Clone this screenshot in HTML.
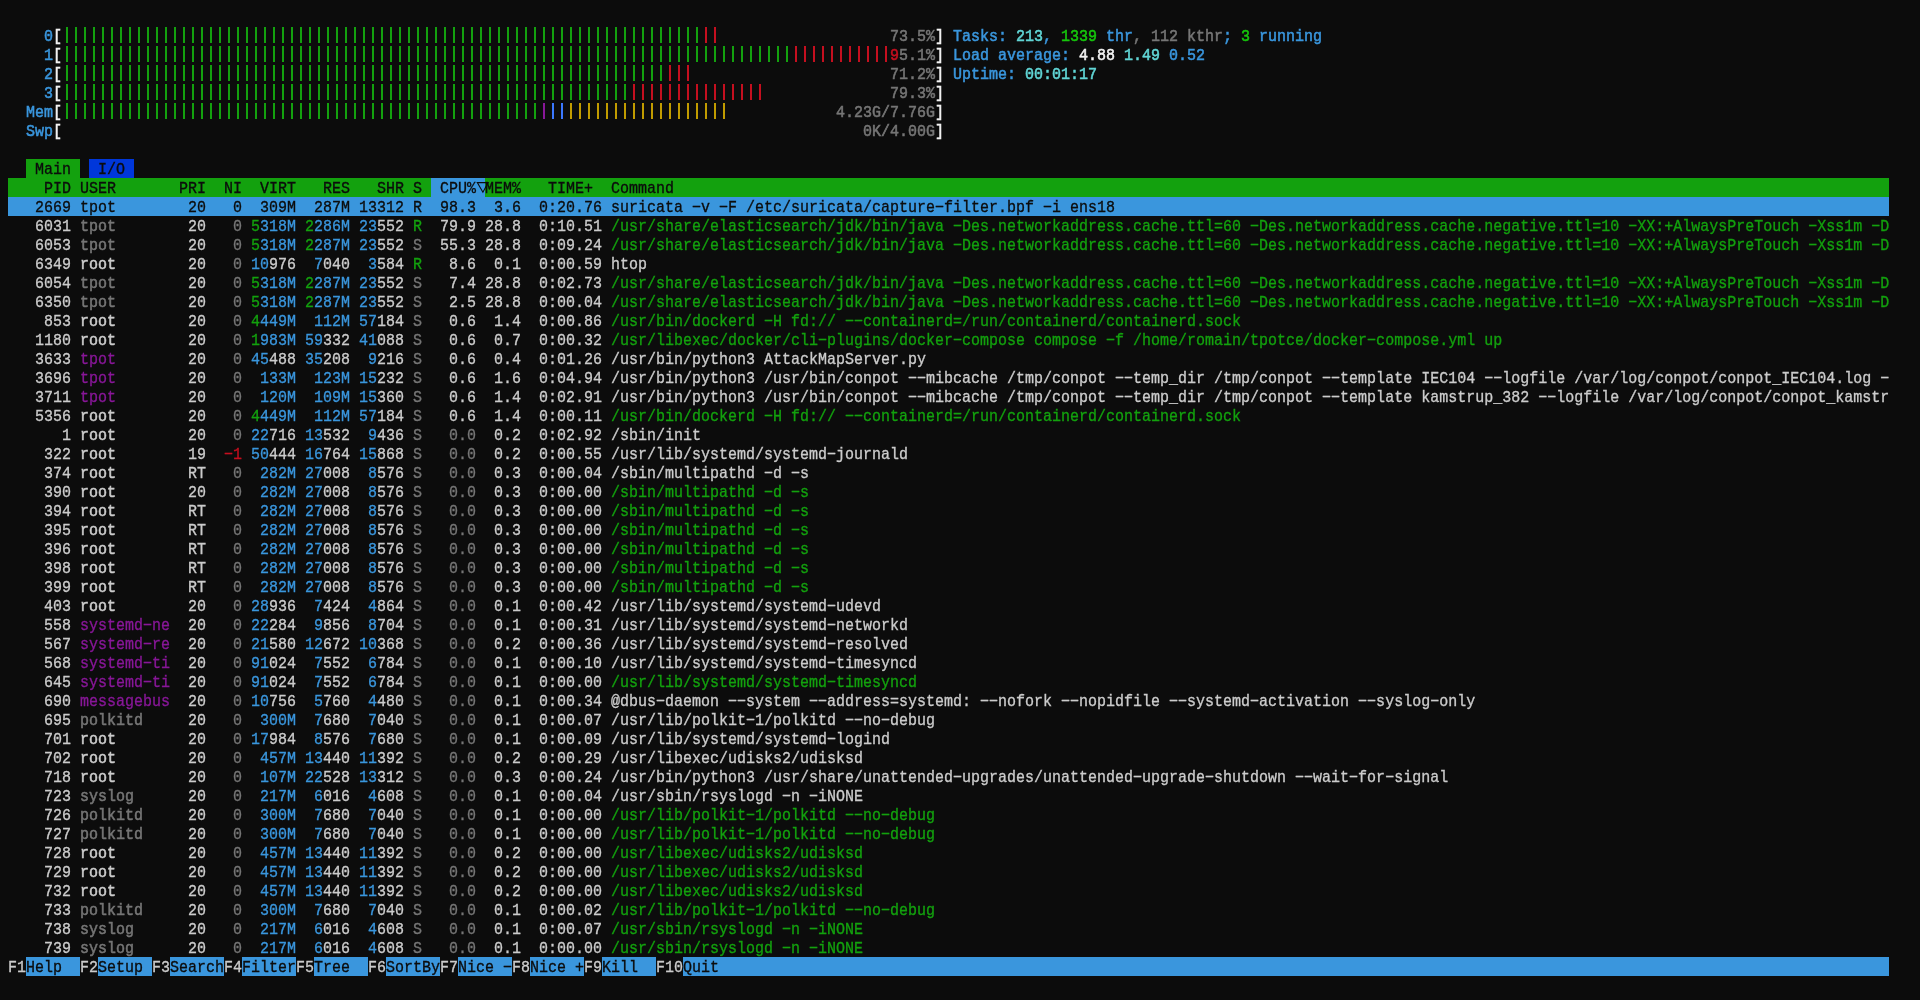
<!DOCTYPE html><html><head><meta charset="utf-8"><style>
html,body{margin:0;padding:0;background:#0c0c0c;width:1920px;height:1000px;overflow:hidden;}
body{position:relative;font-family:"Liberation Mono",monospace;font-size:15px;line-height:19px;}
.r{position:absolute;left:8px;height:19px;white-space:pre;transform:translateY(2px) scaleY(1.1);transform-origin:0 13.5px;will-change:transform}
.b{position:absolute;height:19px;}
.t{position:absolute;white-space:pre;top:0;-webkit-text-stroke:0.3px currentColor}
.c0{color:#cccccc}
.c1{color:#767676}
.c2{color:#3a96dd}
.c3{color:#61d6d6}
.c4{color:#13a10e}
.c5{color:#16c60c}
.c6{color:#c50f1f}
.c7{color:#0037da}
.c8{color:#3b78ff}
.c9{color:#881798}
.c10{color:#c19c00}
.c11{color:#f2f2f2}
.c12{color:#0c0c0c}
.gc0{background:#cccccc}
.gc1{background:#767676}
.gc2{background:#3a96dd}
.gc3{background:#61d6d6}
.gc4{background:#13a10e}
.gc5{background:#16c60c}
.gc6{background:#c50f1f}
.gc7{background:#0037da}
.gc8{background:#3b78ff}
.gc9{background:#881798}
.gc10{background:#c19c00}
.gc11{background:#f2f2f2}
.gc12{background:#0c0c0c}
.B{-webkit-text-stroke:0.5px currentColor}
</style></head><body>
<div class="b gc4" style="top:159px;left:26px;width:54px"></div>
<div class="b gc7" style="top:159px;left:89px;width:45px"></div>
<div class="b gc4" style="top:178px;left:8px;width:1881px"></div>
<div class="b gc2" style="top:178px;left:431px;width:54px"></div>
<div class="b gc2" style="top:197px;left:8px;width:1881px"></div>
<div class="b gc2" style="top:957px;left:26px;width:54px"></div>
<div class="b gc2" style="top:957px;left:98px;width:54px"></div>
<div class="b gc2" style="top:957px;left:170px;width:54px"></div>
<div class="b gc2" style="top:957px;left:242px;width:54px"></div>
<div class="b gc2" style="top:957px;left:314px;width:54px"></div>
<div class="b gc2" style="top:957px;left:386px;width:54px"></div>
<div class="b gc2" style="top:957px;left:458px;width:54px"></div>
<div class="b gc2" style="top:957px;left:530px;width:54px"></div>
<div class="b gc2" style="top:957px;left:602px;width:54px"></div>
<div class="b gc2" style="top:957px;left:683px;width:1206px"></div>
<div style="position:absolute;top:27px;left:66px;width:639px;height:16px;background:repeating-linear-gradient(90deg,#13a10e 0 2px,transparent 2px 9px)"></div>
<div style="position:absolute;top:27px;left:705px;width:18px;height:16px;background:repeating-linear-gradient(90deg,#c50f1f 0 2px,transparent 2px 9px)"></div>
<div style="position:absolute;top:46px;left:66px;width:729px;height:16px;background:repeating-linear-gradient(90deg,#13a10e 0 2px,transparent 2px 9px)"></div>
<div style="position:absolute;top:46px;left:795px;width:99px;height:16px;background:repeating-linear-gradient(90deg,#c50f1f 0 2px,transparent 2px 9px)"></div>
<div style="position:absolute;top:65px;left:66px;width:603px;height:16px;background:repeating-linear-gradient(90deg,#13a10e 0 2px,transparent 2px 9px)"></div>
<div style="position:absolute;top:65px;left:669px;width:27px;height:16px;background:repeating-linear-gradient(90deg,#c50f1f 0 2px,transparent 2px 9px)"></div>
<div style="position:absolute;top:84px;left:66px;width:567px;height:16px;background:repeating-linear-gradient(90deg,#13a10e 0 2px,transparent 2px 9px)"></div>
<div style="position:absolute;top:84px;left:633px;width:135px;height:16px;background:repeating-linear-gradient(90deg,#c50f1f 0 2px,transparent 2px 9px)"></div>
<div style="position:absolute;top:103px;left:66px;width:477px;height:16px;background:repeating-linear-gradient(90deg,#13a10e 0 2px,transparent 2px 9px)"></div>
<div style="position:absolute;top:103px;left:543px;width:9px;height:16px;background:repeating-linear-gradient(90deg,#881798 0 2px,transparent 2px 9px)"></div>
<div style="position:absolute;top:103px;left:552px;width:18px;height:16px;background:repeating-linear-gradient(90deg,#3b78ff 0 2px,transparent 2px 9px)"></div>
<div style="position:absolute;top:103px;left:570px;width:162px;height:16px;background:repeating-linear-gradient(90deg,#c19c00 0 2px,transparent 2px 9px)"></div>
<svg style="position:absolute;left:476px;top:178px" width="14" height="19" viewBox="0 0 14 19"><path d="M1.3 4.6 L12.2 4.6 L6.9 14.2 Z" fill="none" stroke="#0c0c0c" stroke-width="1.1"/></svg>
<div class="r" style="top:26px">
<span class="t c2 B" style="left:18px">  0</span>
<span class="t c11 B" style="left:45px">[</span>
<span class="t c1 B" style="left:882px">73.5%</span>
<span class="t c11 B" style="left:927px">]</span>
<span class="t c2 B" style="left:945px">Tasks: </span>
<span class="t c3 B" style="left:1008px">213</span>
<span class="t c2 B" style="left:1035px">, </span>
<span class="t c5 B" style="left:1053px">1339</span>
<span class="t c2 B" style="left:1089px"> thr</span>
<span class="t c1 B" style="left:1125px">, </span>
<span class="t c1 B" style="left:1143px">112 kthr</span>
<span class="t c2 B" style="left:1215px">; </span>
<span class="t c5 B" style="left:1233px">3</span>
<span class="t c2 B" style="left:1242px"> running</span>
</div>
<div class="r" style="top:45px">
<span class="t c2 B" style="left:18px">  1</span>
<span class="t c11 B" style="left:45px">[</span>
<span class="t c6 B" style="left:882px">9</span>
<span class="t c1 B" style="left:891px">5.1%</span>
<span class="t c11 B" style="left:927px">]</span>
<span class="t c2 B" style="left:945px">Load average: </span>
<span class="t c11 B" style="left:1071px">4.88 </span>
<span class="t c3 B" style="left:1116px">1.49 </span>
<span class="t c2 B" style="left:1161px">0.52</span>
</div>
<div class="r" style="top:64px">
<span class="t c2 B" style="left:18px">  2</span>
<span class="t c11 B" style="left:45px">[</span>
<span class="t c1 B" style="left:882px">71.2%</span>
<span class="t c11 B" style="left:927px">]</span>
<span class="t c2 B" style="left:945px">Uptime: </span>
<span class="t c3 B" style="left:1017px">00:01:17</span>
</div>
<div class="r" style="top:83px">
<span class="t c2 B" style="left:18px">  3</span>
<span class="t c11 B" style="left:45px">[</span>
<span class="t c1 B" style="left:882px">79.3%</span>
<span class="t c11 B" style="left:927px">]</span>
</div>
<div class="r" style="top:102px">
<span class="t c2 B" style="left:18px">Mem</span>
<span class="t c11 B" style="left:45px">[</span>
<span class="t c1 B" style="left:828px">4.23G/7.76G</span>
<span class="t c11 B" style="left:927px">]</span>
</div>
<div class="r" style="top:121px">
<span class="t c2 B" style="left:18px">Swp</span>
<span class="t c11 B" style="left:45px">[</span>
<span class="t c1 B" style="left:855px">0K/4.00G</span>
<span class="t c11 B" style="left:927px">]</span>
</div>
<div class="r" style="top:159px">
<span class="t c12" style="left:27px">Main</span>
<span class="t c12" style="left:90px">I/O</span>
</div>
<div class="r" style="top:178px">
<span class="t c12" style="left:0px">    PID USER       PRI  NI  VIRT   RES   SHR S  CPU%</span>
<span class="t c12" style="left:477px">MEM%   TIME+  Command</span>
</div>
<div class="r" style="top:197px">
<span class="t c12" style="left:0px">   2669 </span>
<span class="t c12" style="left:72px">tpot       </span>
<span class="t c12" style="left:171px"> 20 </span>
<span class="t c12" style="left:207px">  0</span>
<span class="t c12" style="left:234px"> </span>
<span class="t c12" style="left:243px"> 309M</span>
<span class="t c12" style="left:288px"> </span>
<span class="t c12" style="left:297px"> 287M</span>
<span class="t c12" style="left:342px"> </span>
<span class="t c12" style="left:351px">13</span>
<span class="t c12" style="left:369px">312</span>
<span class="t c12" style="left:396px"> </span>
<span class="t c12" style="left:405px">R</span>
<span class="t c12" style="left:414px"> </span>
<span class="t c12" style="left:423px"> 98.3</span>
<span class="t c12" style="left:468px"> </span>
<span class="t c12" style="left:477px"> 3.6 </span>
<span class="t c12" style="left:522px"> 0:20.76 </span>
<span class="t c12" style="left:603px">suricata −v −F /etc/suricata/capture−filter.bpf −i ens18</span>
</div>
<div class="r" style="top:216px">
<span class="t c0" style="left:0px">   6031 </span>
<span class="t c1 B" style="left:72px">tpot       </span>
<span class="t c0" style="left:171px"> 20 </span>
<span class="t c1" style="left:207px">  0</span>
<span class="t c0" style="left:234px"> </span>
<span class="t c4" style="left:243px">5</span>
<span class="t c2" style="left:252px">318M</span>
<span class="t c0" style="left:288px"> </span>
<span class="t c4" style="left:297px">2</span>
<span class="t c2" style="left:306px">286M</span>
<span class="t c0" style="left:342px"> </span>
<span class="t c2" style="left:351px">23</span>
<span class="t c0" style="left:369px">552</span>
<span class="t c0" style="left:396px"> </span>
<span class="t c4" style="left:405px">R</span>
<span class="t c0" style="left:414px"> </span>
<span class="t c0" style="left:423px"> 79.9</span>
<span class="t c0" style="left:468px"> </span>
<span class="t c0" style="left:477px">28.8 </span>
<span class="t c0" style="left:522px"> 0:10.51 </span>
<span class="t c4" style="left:603px">/usr/share/elasticsearch/jdk/bin/java −Des.networkaddress.cache.ttl=60 −Des.networkaddress.cache.negative.ttl=10 −XX:+AlwaysPreTouch −Xss1m −D</span>
</div>
<div class="r" style="top:235px">
<span class="t c0" style="left:0px">   6053 </span>
<span class="t c1 B" style="left:72px">tpot       </span>
<span class="t c0" style="left:171px"> 20 </span>
<span class="t c1" style="left:207px">  0</span>
<span class="t c0" style="left:234px"> </span>
<span class="t c4" style="left:243px">5</span>
<span class="t c2" style="left:252px">318M</span>
<span class="t c0" style="left:288px"> </span>
<span class="t c4" style="left:297px">2</span>
<span class="t c2" style="left:306px">287M</span>
<span class="t c0" style="left:342px"> </span>
<span class="t c2" style="left:351px">23</span>
<span class="t c0" style="left:369px">552</span>
<span class="t c0" style="left:396px"> </span>
<span class="t c1" style="left:405px">S</span>
<span class="t c0" style="left:414px"> </span>
<span class="t c0" style="left:423px"> 55.3</span>
<span class="t c0" style="left:468px"> </span>
<span class="t c0" style="left:477px">28.8 </span>
<span class="t c0" style="left:522px"> 0:09.24 </span>
<span class="t c4" style="left:603px">/usr/share/elasticsearch/jdk/bin/java −Des.networkaddress.cache.ttl=60 −Des.networkaddress.cache.negative.ttl=10 −XX:+AlwaysPreTouch −Xss1m −D</span>
</div>
<div class="r" style="top:254px">
<span class="t c0" style="left:0px">   6349 </span>
<span class="t c0 B" style="left:72px">root       </span>
<span class="t c0" style="left:171px"> 20 </span>
<span class="t c1" style="left:207px">  0</span>
<span class="t c0" style="left:234px"> </span>
<span class="t c2" style="left:243px">10</span>
<span class="t c0" style="left:261px">976</span>
<span class="t c0" style="left:288px"> </span>
<span class="t c2" style="left:297px"> 7</span>
<span class="t c0" style="left:315px">040</span>
<span class="t c0" style="left:342px"> </span>
<span class="t c2" style="left:351px"> 3</span>
<span class="t c0" style="left:369px">584</span>
<span class="t c0" style="left:396px"> </span>
<span class="t c4" style="left:405px">R</span>
<span class="t c0" style="left:414px"> </span>
<span class="t c0" style="left:423px">  8.6</span>
<span class="t c0" style="left:468px"> </span>
<span class="t c0" style="left:477px"> 0.1 </span>
<span class="t c0" style="left:522px"> 0:00.59 </span>
<span class="t c0" style="left:603px">htop</span>
</div>
<div class="r" style="top:273px">
<span class="t c0" style="left:0px">   6054 </span>
<span class="t c1 B" style="left:72px">tpot       </span>
<span class="t c0" style="left:171px"> 20 </span>
<span class="t c1" style="left:207px">  0</span>
<span class="t c0" style="left:234px"> </span>
<span class="t c4" style="left:243px">5</span>
<span class="t c2" style="left:252px">318M</span>
<span class="t c0" style="left:288px"> </span>
<span class="t c4" style="left:297px">2</span>
<span class="t c2" style="left:306px">287M</span>
<span class="t c0" style="left:342px"> </span>
<span class="t c2" style="left:351px">23</span>
<span class="t c0" style="left:369px">552</span>
<span class="t c0" style="left:396px"> </span>
<span class="t c1" style="left:405px">S</span>
<span class="t c0" style="left:414px"> </span>
<span class="t c0" style="left:423px">  7.4</span>
<span class="t c0" style="left:468px"> </span>
<span class="t c0" style="left:477px">28.8 </span>
<span class="t c0" style="left:522px"> 0:02.73 </span>
<span class="t c4" style="left:603px">/usr/share/elasticsearch/jdk/bin/java −Des.networkaddress.cache.ttl=60 −Des.networkaddress.cache.negative.ttl=10 −XX:+AlwaysPreTouch −Xss1m −D</span>
</div>
<div class="r" style="top:292px">
<span class="t c0" style="left:0px">   6350 </span>
<span class="t c1 B" style="left:72px">tpot       </span>
<span class="t c0" style="left:171px"> 20 </span>
<span class="t c1" style="left:207px">  0</span>
<span class="t c0" style="left:234px"> </span>
<span class="t c4" style="left:243px">5</span>
<span class="t c2" style="left:252px">318M</span>
<span class="t c0" style="left:288px"> </span>
<span class="t c4" style="left:297px">2</span>
<span class="t c2" style="left:306px">287M</span>
<span class="t c0" style="left:342px"> </span>
<span class="t c2" style="left:351px">23</span>
<span class="t c0" style="left:369px">552</span>
<span class="t c0" style="left:396px"> </span>
<span class="t c1" style="left:405px">S</span>
<span class="t c0" style="left:414px"> </span>
<span class="t c0" style="left:423px">  2.5</span>
<span class="t c0" style="left:468px"> </span>
<span class="t c0" style="left:477px">28.8 </span>
<span class="t c0" style="left:522px"> 0:00.04 </span>
<span class="t c4" style="left:603px">/usr/share/elasticsearch/jdk/bin/java −Des.networkaddress.cache.ttl=60 −Des.networkaddress.cache.negative.ttl=10 −XX:+AlwaysPreTouch −Xss1m −D</span>
</div>
<div class="r" style="top:311px">
<span class="t c0" style="left:0px">    853 </span>
<span class="t c0 B" style="left:72px">root       </span>
<span class="t c0" style="left:171px"> 20 </span>
<span class="t c1" style="left:207px">  0</span>
<span class="t c0" style="left:234px"> </span>
<span class="t c4" style="left:243px">4</span>
<span class="t c2" style="left:252px">449M</span>
<span class="t c0" style="left:288px"> </span>
<span class="t c2" style="left:297px"> 112M</span>
<span class="t c0" style="left:342px"> </span>
<span class="t c2" style="left:351px">57</span>
<span class="t c0" style="left:369px">184</span>
<span class="t c0" style="left:396px"> </span>
<span class="t c1" style="left:405px">S</span>
<span class="t c0" style="left:414px"> </span>
<span class="t c0" style="left:423px">  0.6</span>
<span class="t c0" style="left:468px"> </span>
<span class="t c0" style="left:477px"> 1.4 </span>
<span class="t c0" style="left:522px"> 0:00.86 </span>
<span class="t c4" style="left:603px">/usr/bin/dockerd −H fd:// −−containerd=/run/containerd/containerd.sock</span>
</div>
<div class="r" style="top:330px">
<span class="t c0" style="left:0px">   1180 </span>
<span class="t c0 B" style="left:72px">root       </span>
<span class="t c0" style="left:171px"> 20 </span>
<span class="t c1" style="left:207px">  0</span>
<span class="t c0" style="left:234px"> </span>
<span class="t c4" style="left:243px">1</span>
<span class="t c2" style="left:252px">983M</span>
<span class="t c0" style="left:288px"> </span>
<span class="t c2" style="left:297px">59</span>
<span class="t c0" style="left:315px">332</span>
<span class="t c0" style="left:342px"> </span>
<span class="t c2" style="left:351px">41</span>
<span class="t c0" style="left:369px">088</span>
<span class="t c0" style="left:396px"> </span>
<span class="t c1" style="left:405px">S</span>
<span class="t c0" style="left:414px"> </span>
<span class="t c0" style="left:423px">  0.6</span>
<span class="t c0" style="left:468px"> </span>
<span class="t c0" style="left:477px"> 0.7 </span>
<span class="t c0" style="left:522px"> 0:00.32 </span>
<span class="t c4" style="left:603px">/usr/libexec/docker/cli−plugins/docker−compose compose −f /home/romain/tpotce/docker−compose.yml up</span>
</div>
<div class="r" style="top:349px">
<span class="t c0" style="left:0px">   3633 </span>
<span class="t c9" style="left:72px">tpot       </span>
<span class="t c0" style="left:171px"> 20 </span>
<span class="t c1" style="left:207px">  0</span>
<span class="t c0" style="left:234px"> </span>
<span class="t c2" style="left:243px">45</span>
<span class="t c0" style="left:261px">488</span>
<span class="t c0" style="left:288px"> </span>
<span class="t c2" style="left:297px">35</span>
<span class="t c0" style="left:315px">208</span>
<span class="t c0" style="left:342px"> </span>
<span class="t c2" style="left:351px"> 9</span>
<span class="t c0" style="left:369px">216</span>
<span class="t c0" style="left:396px"> </span>
<span class="t c1" style="left:405px">S</span>
<span class="t c0" style="left:414px"> </span>
<span class="t c0" style="left:423px">  0.6</span>
<span class="t c0" style="left:468px"> </span>
<span class="t c0" style="left:477px"> 0.4 </span>
<span class="t c0" style="left:522px"> 0:01.26 </span>
<span class="t c0" style="left:603px">/usr/bin/python3 AttackMapServer.py</span>
</div>
<div class="r" style="top:368px">
<span class="t c0" style="left:0px">   3696 </span>
<span class="t c9" style="left:72px">tpot       </span>
<span class="t c0" style="left:171px"> 20 </span>
<span class="t c1" style="left:207px">  0</span>
<span class="t c0" style="left:234px"> </span>
<span class="t c2" style="left:243px"> 133M</span>
<span class="t c0" style="left:288px"> </span>
<span class="t c2" style="left:297px"> 123M</span>
<span class="t c0" style="left:342px"> </span>
<span class="t c2" style="left:351px">15</span>
<span class="t c0" style="left:369px">232</span>
<span class="t c0" style="left:396px"> </span>
<span class="t c1" style="left:405px">S</span>
<span class="t c0" style="left:414px"> </span>
<span class="t c0" style="left:423px">  0.6</span>
<span class="t c0" style="left:468px"> </span>
<span class="t c0" style="left:477px"> 1.6 </span>
<span class="t c0" style="left:522px"> 0:04.94 </span>
<span class="t c0" style="left:603px">/usr/bin/python3 /usr/bin/conpot −−mibcache /tmp/conpot −−temp_dir /tmp/conpot −−template IEC104 −−logfile /var/log/conpot/conpot_IEC104.log −</span>
</div>
<div class="r" style="top:387px">
<span class="t c0" style="left:0px">   3711 </span>
<span class="t c9" style="left:72px">tpot       </span>
<span class="t c0" style="left:171px"> 20 </span>
<span class="t c1" style="left:207px">  0</span>
<span class="t c0" style="left:234px"> </span>
<span class="t c2" style="left:243px"> 120M</span>
<span class="t c0" style="left:288px"> </span>
<span class="t c2" style="left:297px"> 109M</span>
<span class="t c0" style="left:342px"> </span>
<span class="t c2" style="left:351px">15</span>
<span class="t c0" style="left:369px">360</span>
<span class="t c0" style="left:396px"> </span>
<span class="t c1" style="left:405px">S</span>
<span class="t c0" style="left:414px"> </span>
<span class="t c0" style="left:423px">  0.6</span>
<span class="t c0" style="left:468px"> </span>
<span class="t c0" style="left:477px"> 1.4 </span>
<span class="t c0" style="left:522px"> 0:02.91 </span>
<span class="t c0" style="left:603px">/usr/bin/python3 /usr/bin/conpot −−mibcache /tmp/conpot −−temp_dir /tmp/conpot −−template kamstrup_382 −−logfile /var/log/conpot/conpot_kamstr</span>
</div>
<div class="r" style="top:406px">
<span class="t c0" style="left:0px">   5356 </span>
<span class="t c0 B" style="left:72px">root       </span>
<span class="t c0" style="left:171px"> 20 </span>
<span class="t c1" style="left:207px">  0</span>
<span class="t c0" style="left:234px"> </span>
<span class="t c4" style="left:243px">4</span>
<span class="t c2" style="left:252px">449M</span>
<span class="t c0" style="left:288px"> </span>
<span class="t c2" style="left:297px"> 112M</span>
<span class="t c0" style="left:342px"> </span>
<span class="t c2" style="left:351px">57</span>
<span class="t c0" style="left:369px">184</span>
<span class="t c0" style="left:396px"> </span>
<span class="t c1" style="left:405px">S</span>
<span class="t c0" style="left:414px"> </span>
<span class="t c0" style="left:423px">  0.6</span>
<span class="t c0" style="left:468px"> </span>
<span class="t c0" style="left:477px"> 1.4 </span>
<span class="t c0" style="left:522px"> 0:00.11 </span>
<span class="t c4" style="left:603px">/usr/bin/dockerd −H fd:// −−containerd=/run/containerd/containerd.sock</span>
</div>
<div class="r" style="top:425px">
<span class="t c0" style="left:0px">      1 </span>
<span class="t c0 B" style="left:72px">root       </span>
<span class="t c0" style="left:171px"> 20 </span>
<span class="t c1" style="left:207px">  0</span>
<span class="t c0" style="left:234px"> </span>
<span class="t c2" style="left:243px">22</span>
<span class="t c0" style="left:261px">716</span>
<span class="t c0" style="left:288px"> </span>
<span class="t c2" style="left:297px">13</span>
<span class="t c0" style="left:315px">532</span>
<span class="t c0" style="left:342px"> </span>
<span class="t c2" style="left:351px"> 9</span>
<span class="t c0" style="left:369px">436</span>
<span class="t c0" style="left:396px"> </span>
<span class="t c1" style="left:405px">S</span>
<span class="t c0" style="left:414px"> </span>
<span class="t c1" style="left:423px">  0.0</span>
<span class="t c0" style="left:468px"> </span>
<span class="t c0" style="left:477px"> 0.2 </span>
<span class="t c0" style="left:522px"> 0:02.92 </span>
<span class="t c0" style="left:603px">/sbin/init</span>
</div>
<div class="r" style="top:444px">
<span class="t c0" style="left:0px">    322 </span>
<span class="t c0 B" style="left:72px">root       </span>
<span class="t c0" style="left:171px"> 19 </span>
<span class="t c6" style="left:207px"> −1</span>
<span class="t c0" style="left:234px"> </span>
<span class="t c2" style="left:243px">50</span>
<span class="t c0" style="left:261px">444</span>
<span class="t c0" style="left:288px"> </span>
<span class="t c2" style="left:297px">16</span>
<span class="t c0" style="left:315px">764</span>
<span class="t c0" style="left:342px"> </span>
<span class="t c2" style="left:351px">15</span>
<span class="t c0" style="left:369px">868</span>
<span class="t c0" style="left:396px"> </span>
<span class="t c1" style="left:405px">S</span>
<span class="t c0" style="left:414px"> </span>
<span class="t c1" style="left:423px">  0.0</span>
<span class="t c0" style="left:468px"> </span>
<span class="t c0" style="left:477px"> 0.2 </span>
<span class="t c0" style="left:522px"> 0:00.55 </span>
<span class="t c0" style="left:603px">/usr/lib/systemd/systemd−journald</span>
</div>
<div class="r" style="top:463px">
<span class="t c0" style="left:0px">    374 </span>
<span class="t c0 B" style="left:72px">root       </span>
<span class="t c0" style="left:171px"> RT </span>
<span class="t c1" style="left:207px">  0</span>
<span class="t c0" style="left:234px"> </span>
<span class="t c2" style="left:243px"> 282M</span>
<span class="t c0" style="left:288px"> </span>
<span class="t c2" style="left:297px">27</span>
<span class="t c0" style="left:315px">008</span>
<span class="t c0" style="left:342px"> </span>
<span class="t c2" style="left:351px"> 8</span>
<span class="t c0" style="left:369px">576</span>
<span class="t c0" style="left:396px"> </span>
<span class="t c1" style="left:405px">S</span>
<span class="t c0" style="left:414px"> </span>
<span class="t c1" style="left:423px">  0.0</span>
<span class="t c0" style="left:468px"> </span>
<span class="t c0" style="left:477px"> 0.3 </span>
<span class="t c0" style="left:522px"> 0:00.04 </span>
<span class="t c0" style="left:603px">/sbin/multipathd −d −s</span>
</div>
<div class="r" style="top:482px">
<span class="t c0" style="left:0px">    390 </span>
<span class="t c0 B" style="left:72px">root       </span>
<span class="t c0" style="left:171px"> 20 </span>
<span class="t c1" style="left:207px">  0</span>
<span class="t c0" style="left:234px"> </span>
<span class="t c2" style="left:243px"> 282M</span>
<span class="t c0" style="left:288px"> </span>
<span class="t c2" style="left:297px">27</span>
<span class="t c0" style="left:315px">008</span>
<span class="t c0" style="left:342px"> </span>
<span class="t c2" style="left:351px"> 8</span>
<span class="t c0" style="left:369px">576</span>
<span class="t c0" style="left:396px"> </span>
<span class="t c1" style="left:405px">S</span>
<span class="t c0" style="left:414px"> </span>
<span class="t c1" style="left:423px">  0.0</span>
<span class="t c0" style="left:468px"> </span>
<span class="t c0" style="left:477px"> 0.3 </span>
<span class="t c0" style="left:522px"> 0:00.00 </span>
<span class="t c4" style="left:603px">/sbin/multipathd −d −s</span>
</div>
<div class="r" style="top:501px">
<span class="t c0" style="left:0px">    394 </span>
<span class="t c0 B" style="left:72px">root       </span>
<span class="t c0" style="left:171px"> RT </span>
<span class="t c1" style="left:207px">  0</span>
<span class="t c0" style="left:234px"> </span>
<span class="t c2" style="left:243px"> 282M</span>
<span class="t c0" style="left:288px"> </span>
<span class="t c2" style="left:297px">27</span>
<span class="t c0" style="left:315px">008</span>
<span class="t c0" style="left:342px"> </span>
<span class="t c2" style="left:351px"> 8</span>
<span class="t c0" style="left:369px">576</span>
<span class="t c0" style="left:396px"> </span>
<span class="t c1" style="left:405px">S</span>
<span class="t c0" style="left:414px"> </span>
<span class="t c1" style="left:423px">  0.0</span>
<span class="t c0" style="left:468px"> </span>
<span class="t c0" style="left:477px"> 0.3 </span>
<span class="t c0" style="left:522px"> 0:00.00 </span>
<span class="t c4" style="left:603px">/sbin/multipathd −d −s</span>
</div>
<div class="r" style="top:520px">
<span class="t c0" style="left:0px">    395 </span>
<span class="t c0 B" style="left:72px">root       </span>
<span class="t c0" style="left:171px"> RT </span>
<span class="t c1" style="left:207px">  0</span>
<span class="t c0" style="left:234px"> </span>
<span class="t c2" style="left:243px"> 282M</span>
<span class="t c0" style="left:288px"> </span>
<span class="t c2" style="left:297px">27</span>
<span class="t c0" style="left:315px">008</span>
<span class="t c0" style="left:342px"> </span>
<span class="t c2" style="left:351px"> 8</span>
<span class="t c0" style="left:369px">576</span>
<span class="t c0" style="left:396px"> </span>
<span class="t c1" style="left:405px">S</span>
<span class="t c0" style="left:414px"> </span>
<span class="t c1" style="left:423px">  0.0</span>
<span class="t c0" style="left:468px"> </span>
<span class="t c0" style="left:477px"> 0.3 </span>
<span class="t c0" style="left:522px"> 0:00.00 </span>
<span class="t c4" style="left:603px">/sbin/multipathd −d −s</span>
</div>
<div class="r" style="top:539px">
<span class="t c0" style="left:0px">    396 </span>
<span class="t c0 B" style="left:72px">root       </span>
<span class="t c0" style="left:171px"> RT </span>
<span class="t c1" style="left:207px">  0</span>
<span class="t c0" style="left:234px"> </span>
<span class="t c2" style="left:243px"> 282M</span>
<span class="t c0" style="left:288px"> </span>
<span class="t c2" style="left:297px">27</span>
<span class="t c0" style="left:315px">008</span>
<span class="t c0" style="left:342px"> </span>
<span class="t c2" style="left:351px"> 8</span>
<span class="t c0" style="left:369px">576</span>
<span class="t c0" style="left:396px"> </span>
<span class="t c1" style="left:405px">S</span>
<span class="t c0" style="left:414px"> </span>
<span class="t c1" style="left:423px">  0.0</span>
<span class="t c0" style="left:468px"> </span>
<span class="t c0" style="left:477px"> 0.3 </span>
<span class="t c0" style="left:522px"> 0:00.00 </span>
<span class="t c4" style="left:603px">/sbin/multipathd −d −s</span>
</div>
<div class="r" style="top:558px">
<span class="t c0" style="left:0px">    398 </span>
<span class="t c0 B" style="left:72px">root       </span>
<span class="t c0" style="left:171px"> RT </span>
<span class="t c1" style="left:207px">  0</span>
<span class="t c0" style="left:234px"> </span>
<span class="t c2" style="left:243px"> 282M</span>
<span class="t c0" style="left:288px"> </span>
<span class="t c2" style="left:297px">27</span>
<span class="t c0" style="left:315px">008</span>
<span class="t c0" style="left:342px"> </span>
<span class="t c2" style="left:351px"> 8</span>
<span class="t c0" style="left:369px">576</span>
<span class="t c0" style="left:396px"> </span>
<span class="t c1" style="left:405px">S</span>
<span class="t c0" style="left:414px"> </span>
<span class="t c1" style="left:423px">  0.0</span>
<span class="t c0" style="left:468px"> </span>
<span class="t c0" style="left:477px"> 0.3 </span>
<span class="t c0" style="left:522px"> 0:00.00 </span>
<span class="t c4" style="left:603px">/sbin/multipathd −d −s</span>
</div>
<div class="r" style="top:577px">
<span class="t c0" style="left:0px">    399 </span>
<span class="t c0 B" style="left:72px">root       </span>
<span class="t c0" style="left:171px"> RT </span>
<span class="t c1" style="left:207px">  0</span>
<span class="t c0" style="left:234px"> </span>
<span class="t c2" style="left:243px"> 282M</span>
<span class="t c0" style="left:288px"> </span>
<span class="t c2" style="left:297px">27</span>
<span class="t c0" style="left:315px">008</span>
<span class="t c0" style="left:342px"> </span>
<span class="t c2" style="left:351px"> 8</span>
<span class="t c0" style="left:369px">576</span>
<span class="t c0" style="left:396px"> </span>
<span class="t c1" style="left:405px">S</span>
<span class="t c0" style="left:414px"> </span>
<span class="t c1" style="left:423px">  0.0</span>
<span class="t c0" style="left:468px"> </span>
<span class="t c0" style="left:477px"> 0.3 </span>
<span class="t c0" style="left:522px"> 0:00.00 </span>
<span class="t c4" style="left:603px">/sbin/multipathd −d −s</span>
</div>
<div class="r" style="top:596px">
<span class="t c0" style="left:0px">    403 </span>
<span class="t c0 B" style="left:72px">root       </span>
<span class="t c0" style="left:171px"> 20 </span>
<span class="t c1" style="left:207px">  0</span>
<span class="t c0" style="left:234px"> </span>
<span class="t c2" style="left:243px">28</span>
<span class="t c0" style="left:261px">936</span>
<span class="t c0" style="left:288px"> </span>
<span class="t c2" style="left:297px"> 7</span>
<span class="t c0" style="left:315px">424</span>
<span class="t c0" style="left:342px"> </span>
<span class="t c2" style="left:351px"> 4</span>
<span class="t c0" style="left:369px">864</span>
<span class="t c0" style="left:396px"> </span>
<span class="t c1" style="left:405px">S</span>
<span class="t c0" style="left:414px"> </span>
<span class="t c1" style="left:423px">  0.0</span>
<span class="t c0" style="left:468px"> </span>
<span class="t c0" style="left:477px"> 0.1 </span>
<span class="t c0" style="left:522px"> 0:00.42 </span>
<span class="t c0" style="left:603px">/usr/lib/systemd/systemd−udevd</span>
</div>
<div class="r" style="top:615px">
<span class="t c0" style="left:0px">    558 </span>
<span class="t c9" style="left:72px">systemd−ne </span>
<span class="t c0" style="left:171px"> 20 </span>
<span class="t c1" style="left:207px">  0</span>
<span class="t c0" style="left:234px"> </span>
<span class="t c2" style="left:243px">22</span>
<span class="t c0" style="left:261px">284</span>
<span class="t c0" style="left:288px"> </span>
<span class="t c2" style="left:297px"> 9</span>
<span class="t c0" style="left:315px">856</span>
<span class="t c0" style="left:342px"> </span>
<span class="t c2" style="left:351px"> 8</span>
<span class="t c0" style="left:369px">704</span>
<span class="t c0" style="left:396px"> </span>
<span class="t c1" style="left:405px">S</span>
<span class="t c0" style="left:414px"> </span>
<span class="t c1" style="left:423px">  0.0</span>
<span class="t c0" style="left:468px"> </span>
<span class="t c0" style="left:477px"> 0.1 </span>
<span class="t c0" style="left:522px"> 0:00.31 </span>
<span class="t c0" style="left:603px">/usr/lib/systemd/systemd−networkd</span>
</div>
<div class="r" style="top:634px">
<span class="t c0" style="left:0px">    567 </span>
<span class="t c9" style="left:72px">systemd−re </span>
<span class="t c0" style="left:171px"> 20 </span>
<span class="t c1" style="left:207px">  0</span>
<span class="t c0" style="left:234px"> </span>
<span class="t c2" style="left:243px">21</span>
<span class="t c0" style="left:261px">580</span>
<span class="t c0" style="left:288px"> </span>
<span class="t c2" style="left:297px">12</span>
<span class="t c0" style="left:315px">672</span>
<span class="t c0" style="left:342px"> </span>
<span class="t c2" style="left:351px">10</span>
<span class="t c0" style="left:369px">368</span>
<span class="t c0" style="left:396px"> </span>
<span class="t c1" style="left:405px">S</span>
<span class="t c0" style="left:414px"> </span>
<span class="t c1" style="left:423px">  0.0</span>
<span class="t c0" style="left:468px"> </span>
<span class="t c0" style="left:477px"> 0.2 </span>
<span class="t c0" style="left:522px"> 0:00.36 </span>
<span class="t c0" style="left:603px">/usr/lib/systemd/systemd−resolved</span>
</div>
<div class="r" style="top:653px">
<span class="t c0" style="left:0px">    568 </span>
<span class="t c9" style="left:72px">systemd−ti </span>
<span class="t c0" style="left:171px"> 20 </span>
<span class="t c1" style="left:207px">  0</span>
<span class="t c0" style="left:234px"> </span>
<span class="t c2" style="left:243px">91</span>
<span class="t c0" style="left:261px">024</span>
<span class="t c0" style="left:288px"> </span>
<span class="t c2" style="left:297px"> 7</span>
<span class="t c0" style="left:315px">552</span>
<span class="t c0" style="left:342px"> </span>
<span class="t c2" style="left:351px"> 6</span>
<span class="t c0" style="left:369px">784</span>
<span class="t c0" style="left:396px"> </span>
<span class="t c1" style="left:405px">S</span>
<span class="t c0" style="left:414px"> </span>
<span class="t c1" style="left:423px">  0.0</span>
<span class="t c0" style="left:468px"> </span>
<span class="t c0" style="left:477px"> 0.1 </span>
<span class="t c0" style="left:522px"> 0:00.10 </span>
<span class="t c0" style="left:603px">/usr/lib/systemd/systemd−timesyncd</span>
</div>
<div class="r" style="top:672px">
<span class="t c0" style="left:0px">    645 </span>
<span class="t c9" style="left:72px">systemd−ti </span>
<span class="t c0" style="left:171px"> 20 </span>
<span class="t c1" style="left:207px">  0</span>
<span class="t c0" style="left:234px"> </span>
<span class="t c2" style="left:243px">91</span>
<span class="t c0" style="left:261px">024</span>
<span class="t c0" style="left:288px"> </span>
<span class="t c2" style="left:297px"> 7</span>
<span class="t c0" style="left:315px">552</span>
<span class="t c0" style="left:342px"> </span>
<span class="t c2" style="left:351px"> 6</span>
<span class="t c0" style="left:369px">784</span>
<span class="t c0" style="left:396px"> </span>
<span class="t c1" style="left:405px">S</span>
<span class="t c0" style="left:414px"> </span>
<span class="t c1" style="left:423px">  0.0</span>
<span class="t c0" style="left:468px"> </span>
<span class="t c0" style="left:477px"> 0.1 </span>
<span class="t c0" style="left:522px"> 0:00.00 </span>
<span class="t c4" style="left:603px">/usr/lib/systemd/systemd−timesyncd</span>
</div>
<div class="r" style="top:691px">
<span class="t c0" style="left:0px">    690 </span>
<span class="t c9" style="left:72px">messagebus </span>
<span class="t c0" style="left:171px"> 20 </span>
<span class="t c1" style="left:207px">  0</span>
<span class="t c0" style="left:234px"> </span>
<span class="t c2" style="left:243px">10</span>
<span class="t c0" style="left:261px">756</span>
<span class="t c0" style="left:288px"> </span>
<span class="t c2" style="left:297px"> 5</span>
<span class="t c0" style="left:315px">760</span>
<span class="t c0" style="left:342px"> </span>
<span class="t c2" style="left:351px"> 4</span>
<span class="t c0" style="left:369px">480</span>
<span class="t c0" style="left:396px"> </span>
<span class="t c1" style="left:405px">S</span>
<span class="t c0" style="left:414px"> </span>
<span class="t c1" style="left:423px">  0.0</span>
<span class="t c0" style="left:468px"> </span>
<span class="t c0" style="left:477px"> 0.1 </span>
<span class="t c0" style="left:522px"> 0:00.34 </span>
<span class="t c0" style="left:603px">@dbus−daemon −−system −−address=systemd: −−nofork −−nopidfile −−systemd−activation −−syslog−only</span>
</div>
<div class="r" style="top:710px">
<span class="t c0" style="left:0px">    695 </span>
<span class="t c1 B" style="left:72px">polkitd    </span>
<span class="t c0" style="left:171px"> 20 </span>
<span class="t c1" style="left:207px">  0</span>
<span class="t c0" style="left:234px"> </span>
<span class="t c2" style="left:243px"> 300M</span>
<span class="t c0" style="left:288px"> </span>
<span class="t c2" style="left:297px"> 7</span>
<span class="t c0" style="left:315px">680</span>
<span class="t c0" style="left:342px"> </span>
<span class="t c2" style="left:351px"> 7</span>
<span class="t c0" style="left:369px">040</span>
<span class="t c0" style="left:396px"> </span>
<span class="t c1" style="left:405px">S</span>
<span class="t c0" style="left:414px"> </span>
<span class="t c1" style="left:423px">  0.0</span>
<span class="t c0" style="left:468px"> </span>
<span class="t c0" style="left:477px"> 0.1 </span>
<span class="t c0" style="left:522px"> 0:00.07 </span>
<span class="t c0" style="left:603px">/usr/lib/polkit−1/polkitd −−no−debug</span>
</div>
<div class="r" style="top:729px">
<span class="t c0" style="left:0px">    701 </span>
<span class="t c0 B" style="left:72px">root       </span>
<span class="t c0" style="left:171px"> 20 </span>
<span class="t c1" style="left:207px">  0</span>
<span class="t c0" style="left:234px"> </span>
<span class="t c2" style="left:243px">17</span>
<span class="t c0" style="left:261px">984</span>
<span class="t c0" style="left:288px"> </span>
<span class="t c2" style="left:297px"> 8</span>
<span class="t c0" style="left:315px">576</span>
<span class="t c0" style="left:342px"> </span>
<span class="t c2" style="left:351px"> 7</span>
<span class="t c0" style="left:369px">680</span>
<span class="t c0" style="left:396px"> </span>
<span class="t c1" style="left:405px">S</span>
<span class="t c0" style="left:414px"> </span>
<span class="t c1" style="left:423px">  0.0</span>
<span class="t c0" style="left:468px"> </span>
<span class="t c0" style="left:477px"> 0.1 </span>
<span class="t c0" style="left:522px"> 0:00.09 </span>
<span class="t c0" style="left:603px">/usr/lib/systemd/systemd−logind</span>
</div>
<div class="r" style="top:748px">
<span class="t c0" style="left:0px">    702 </span>
<span class="t c0 B" style="left:72px">root       </span>
<span class="t c0" style="left:171px"> 20 </span>
<span class="t c1" style="left:207px">  0</span>
<span class="t c0" style="left:234px"> </span>
<span class="t c2" style="left:243px"> 457M</span>
<span class="t c0" style="left:288px"> </span>
<span class="t c2" style="left:297px">13</span>
<span class="t c0" style="left:315px">440</span>
<span class="t c0" style="left:342px"> </span>
<span class="t c2" style="left:351px">11</span>
<span class="t c0" style="left:369px">392</span>
<span class="t c0" style="left:396px"> </span>
<span class="t c1" style="left:405px">S</span>
<span class="t c0" style="left:414px"> </span>
<span class="t c1" style="left:423px">  0.0</span>
<span class="t c0" style="left:468px"> </span>
<span class="t c0" style="left:477px"> 0.2 </span>
<span class="t c0" style="left:522px"> 0:00.29 </span>
<span class="t c0" style="left:603px">/usr/libexec/udisks2/udisksd</span>
</div>
<div class="r" style="top:767px">
<span class="t c0" style="left:0px">    718 </span>
<span class="t c0 B" style="left:72px">root       </span>
<span class="t c0" style="left:171px"> 20 </span>
<span class="t c1" style="left:207px">  0</span>
<span class="t c0" style="left:234px"> </span>
<span class="t c2" style="left:243px"> 107M</span>
<span class="t c0" style="left:288px"> </span>
<span class="t c2" style="left:297px">22</span>
<span class="t c0" style="left:315px">528</span>
<span class="t c0" style="left:342px"> </span>
<span class="t c2" style="left:351px">13</span>
<span class="t c0" style="left:369px">312</span>
<span class="t c0" style="left:396px"> </span>
<span class="t c1" style="left:405px">S</span>
<span class="t c0" style="left:414px"> </span>
<span class="t c1" style="left:423px">  0.0</span>
<span class="t c0" style="left:468px"> </span>
<span class="t c0" style="left:477px"> 0.3 </span>
<span class="t c0" style="left:522px"> 0:00.24 </span>
<span class="t c0" style="left:603px">/usr/bin/python3 /usr/share/unattended−upgrades/unattended−upgrade−shutdown −−wait−for−signal</span>
</div>
<div class="r" style="top:786px">
<span class="t c0" style="left:0px">    723 </span>
<span class="t c1 B" style="left:72px">syslog     </span>
<span class="t c0" style="left:171px"> 20 </span>
<span class="t c1" style="left:207px">  0</span>
<span class="t c0" style="left:234px"> </span>
<span class="t c2" style="left:243px"> 217M</span>
<span class="t c0" style="left:288px"> </span>
<span class="t c2" style="left:297px"> 6</span>
<span class="t c0" style="left:315px">016</span>
<span class="t c0" style="left:342px"> </span>
<span class="t c2" style="left:351px"> 4</span>
<span class="t c0" style="left:369px">608</span>
<span class="t c0" style="left:396px"> </span>
<span class="t c1" style="left:405px">S</span>
<span class="t c0" style="left:414px"> </span>
<span class="t c1" style="left:423px">  0.0</span>
<span class="t c0" style="left:468px"> </span>
<span class="t c0" style="left:477px"> 0.1 </span>
<span class="t c0" style="left:522px"> 0:00.04 </span>
<span class="t c0" style="left:603px">/usr/sbin/rsyslogd −n −iNONE</span>
</div>
<div class="r" style="top:805px">
<span class="t c0" style="left:0px">    726 </span>
<span class="t c1 B" style="left:72px">polkitd    </span>
<span class="t c0" style="left:171px"> 20 </span>
<span class="t c1" style="left:207px">  0</span>
<span class="t c0" style="left:234px"> </span>
<span class="t c2" style="left:243px"> 300M</span>
<span class="t c0" style="left:288px"> </span>
<span class="t c2" style="left:297px"> 7</span>
<span class="t c0" style="left:315px">680</span>
<span class="t c0" style="left:342px"> </span>
<span class="t c2" style="left:351px"> 7</span>
<span class="t c0" style="left:369px">040</span>
<span class="t c0" style="left:396px"> </span>
<span class="t c1" style="left:405px">S</span>
<span class="t c0" style="left:414px"> </span>
<span class="t c1" style="left:423px">  0.0</span>
<span class="t c0" style="left:468px"> </span>
<span class="t c0" style="left:477px"> 0.1 </span>
<span class="t c0" style="left:522px"> 0:00.00 </span>
<span class="t c4" style="left:603px">/usr/lib/polkit−1/polkitd −−no−debug</span>
</div>
<div class="r" style="top:824px">
<span class="t c0" style="left:0px">    727 </span>
<span class="t c1 B" style="left:72px">polkitd    </span>
<span class="t c0" style="left:171px"> 20 </span>
<span class="t c1" style="left:207px">  0</span>
<span class="t c0" style="left:234px"> </span>
<span class="t c2" style="left:243px"> 300M</span>
<span class="t c0" style="left:288px"> </span>
<span class="t c2" style="left:297px"> 7</span>
<span class="t c0" style="left:315px">680</span>
<span class="t c0" style="left:342px"> </span>
<span class="t c2" style="left:351px"> 7</span>
<span class="t c0" style="left:369px">040</span>
<span class="t c0" style="left:396px"> </span>
<span class="t c1" style="left:405px">S</span>
<span class="t c0" style="left:414px"> </span>
<span class="t c1" style="left:423px">  0.0</span>
<span class="t c0" style="left:468px"> </span>
<span class="t c0" style="left:477px"> 0.1 </span>
<span class="t c0" style="left:522px"> 0:00.00 </span>
<span class="t c4" style="left:603px">/usr/lib/polkit−1/polkitd −−no−debug</span>
</div>
<div class="r" style="top:843px">
<span class="t c0" style="left:0px">    728 </span>
<span class="t c0 B" style="left:72px">root       </span>
<span class="t c0" style="left:171px"> 20 </span>
<span class="t c1" style="left:207px">  0</span>
<span class="t c0" style="left:234px"> </span>
<span class="t c2" style="left:243px"> 457M</span>
<span class="t c0" style="left:288px"> </span>
<span class="t c2" style="left:297px">13</span>
<span class="t c0" style="left:315px">440</span>
<span class="t c0" style="left:342px"> </span>
<span class="t c2" style="left:351px">11</span>
<span class="t c0" style="left:369px">392</span>
<span class="t c0" style="left:396px"> </span>
<span class="t c1" style="left:405px">S</span>
<span class="t c0" style="left:414px"> </span>
<span class="t c1" style="left:423px">  0.0</span>
<span class="t c0" style="left:468px"> </span>
<span class="t c0" style="left:477px"> 0.2 </span>
<span class="t c0" style="left:522px"> 0:00.00 </span>
<span class="t c4" style="left:603px">/usr/libexec/udisks2/udisksd</span>
</div>
<div class="r" style="top:862px">
<span class="t c0" style="left:0px">    729 </span>
<span class="t c0 B" style="left:72px">root       </span>
<span class="t c0" style="left:171px"> 20 </span>
<span class="t c1" style="left:207px">  0</span>
<span class="t c0" style="left:234px"> </span>
<span class="t c2" style="left:243px"> 457M</span>
<span class="t c0" style="left:288px"> </span>
<span class="t c2" style="left:297px">13</span>
<span class="t c0" style="left:315px">440</span>
<span class="t c0" style="left:342px"> </span>
<span class="t c2" style="left:351px">11</span>
<span class="t c0" style="left:369px">392</span>
<span class="t c0" style="left:396px"> </span>
<span class="t c1" style="left:405px">S</span>
<span class="t c0" style="left:414px"> </span>
<span class="t c1" style="left:423px">  0.0</span>
<span class="t c0" style="left:468px"> </span>
<span class="t c0" style="left:477px"> 0.2 </span>
<span class="t c0" style="left:522px"> 0:00.00 </span>
<span class="t c4" style="left:603px">/usr/libexec/udisks2/udisksd</span>
</div>
<div class="r" style="top:881px">
<span class="t c0" style="left:0px">    732 </span>
<span class="t c0 B" style="left:72px">root       </span>
<span class="t c0" style="left:171px"> 20 </span>
<span class="t c1" style="left:207px">  0</span>
<span class="t c0" style="left:234px"> </span>
<span class="t c2" style="left:243px"> 457M</span>
<span class="t c0" style="left:288px"> </span>
<span class="t c2" style="left:297px">13</span>
<span class="t c0" style="left:315px">440</span>
<span class="t c0" style="left:342px"> </span>
<span class="t c2" style="left:351px">11</span>
<span class="t c0" style="left:369px">392</span>
<span class="t c0" style="left:396px"> </span>
<span class="t c1" style="left:405px">S</span>
<span class="t c0" style="left:414px"> </span>
<span class="t c1" style="left:423px">  0.0</span>
<span class="t c0" style="left:468px"> </span>
<span class="t c0" style="left:477px"> 0.2 </span>
<span class="t c0" style="left:522px"> 0:00.00 </span>
<span class="t c4" style="left:603px">/usr/libexec/udisks2/udisksd</span>
</div>
<div class="r" style="top:900px">
<span class="t c0" style="left:0px">    733 </span>
<span class="t c1 B" style="left:72px">polkitd    </span>
<span class="t c0" style="left:171px"> 20 </span>
<span class="t c1" style="left:207px">  0</span>
<span class="t c0" style="left:234px"> </span>
<span class="t c2" style="left:243px"> 300M</span>
<span class="t c0" style="left:288px"> </span>
<span class="t c2" style="left:297px"> 7</span>
<span class="t c0" style="left:315px">680</span>
<span class="t c0" style="left:342px"> </span>
<span class="t c2" style="left:351px"> 7</span>
<span class="t c0" style="left:369px">040</span>
<span class="t c0" style="left:396px"> </span>
<span class="t c1" style="left:405px">S</span>
<span class="t c0" style="left:414px"> </span>
<span class="t c1" style="left:423px">  0.0</span>
<span class="t c0" style="left:468px"> </span>
<span class="t c0" style="left:477px"> 0.1 </span>
<span class="t c0" style="left:522px"> 0:00.02 </span>
<span class="t c4" style="left:603px">/usr/lib/polkit−1/polkitd −−no−debug</span>
</div>
<div class="r" style="top:919px">
<span class="t c0" style="left:0px">    738 </span>
<span class="t c1 B" style="left:72px">syslog     </span>
<span class="t c0" style="left:171px"> 20 </span>
<span class="t c1" style="left:207px">  0</span>
<span class="t c0" style="left:234px"> </span>
<span class="t c2" style="left:243px"> 217M</span>
<span class="t c0" style="left:288px"> </span>
<span class="t c2" style="left:297px"> 6</span>
<span class="t c0" style="left:315px">016</span>
<span class="t c0" style="left:342px"> </span>
<span class="t c2" style="left:351px"> 4</span>
<span class="t c0" style="left:369px">608</span>
<span class="t c0" style="left:396px"> </span>
<span class="t c1" style="left:405px">S</span>
<span class="t c0" style="left:414px"> </span>
<span class="t c1" style="left:423px">  0.0</span>
<span class="t c0" style="left:468px"> </span>
<span class="t c0" style="left:477px"> 0.1 </span>
<span class="t c0" style="left:522px"> 0:00.07 </span>
<span class="t c4" style="left:603px">/usr/sbin/rsyslogd −n −iNONE</span>
</div>
<div class="r" style="top:938px">
<span class="t c0" style="left:0px">    739 </span>
<span class="t c1 B" style="left:72px">syslog     </span>
<span class="t c0" style="left:171px"> 20 </span>
<span class="t c1" style="left:207px">  0</span>
<span class="t c0" style="left:234px"> </span>
<span class="t c2" style="left:243px"> 217M</span>
<span class="t c0" style="left:288px"> </span>
<span class="t c2" style="left:297px"> 6</span>
<span class="t c0" style="left:315px">016</span>
<span class="t c0" style="left:342px"> </span>
<span class="t c2" style="left:351px"> 4</span>
<span class="t c0" style="left:369px">608</span>
<span class="t c0" style="left:396px"> </span>
<span class="t c1" style="left:405px">S</span>
<span class="t c0" style="left:414px"> </span>
<span class="t c1" style="left:423px">  0.0</span>
<span class="t c0" style="left:468px"> </span>
<span class="t c0" style="left:477px"> 0.1 </span>
<span class="t c0" style="left:522px"> 0:00.00 </span>
<span class="t c4" style="left:603px">/usr/sbin/rsyslogd −n −iNONE</span>
</div>
<div class="r" style="top:957px">
<span class="t c0" style="left:0px">F1</span>
<span class="t c12" style="left:18px">Help  </span>
<span class="t c0" style="left:72px">F2</span>
<span class="t c12" style="left:90px">Setup </span>
<span class="t c0" style="left:144px">F3</span>
<span class="t c12" style="left:162px">Search</span>
<span class="t c0" style="left:216px">F4</span>
<span class="t c12" style="left:234px">Filter</span>
<span class="t c0" style="left:288px">F5</span>
<span class="t c12" style="left:306px">Tree  </span>
<span class="t c0" style="left:360px">F6</span>
<span class="t c12" style="left:378px">SortBy</span>
<span class="t c0" style="left:432px">F7</span>
<span class="t c12" style="left:450px">Nice −</span>
<span class="t c0" style="left:504px">F8</span>
<span class="t c12" style="left:522px">Nice +</span>
<span class="t c0" style="left:576px">F9</span>
<span class="t c12" style="left:594px">Kill  </span>
<span class="t c0" style="left:648px">F10</span>
<span class="t c12" style="left:675px">Quit</span>
</div>
</body></html>
